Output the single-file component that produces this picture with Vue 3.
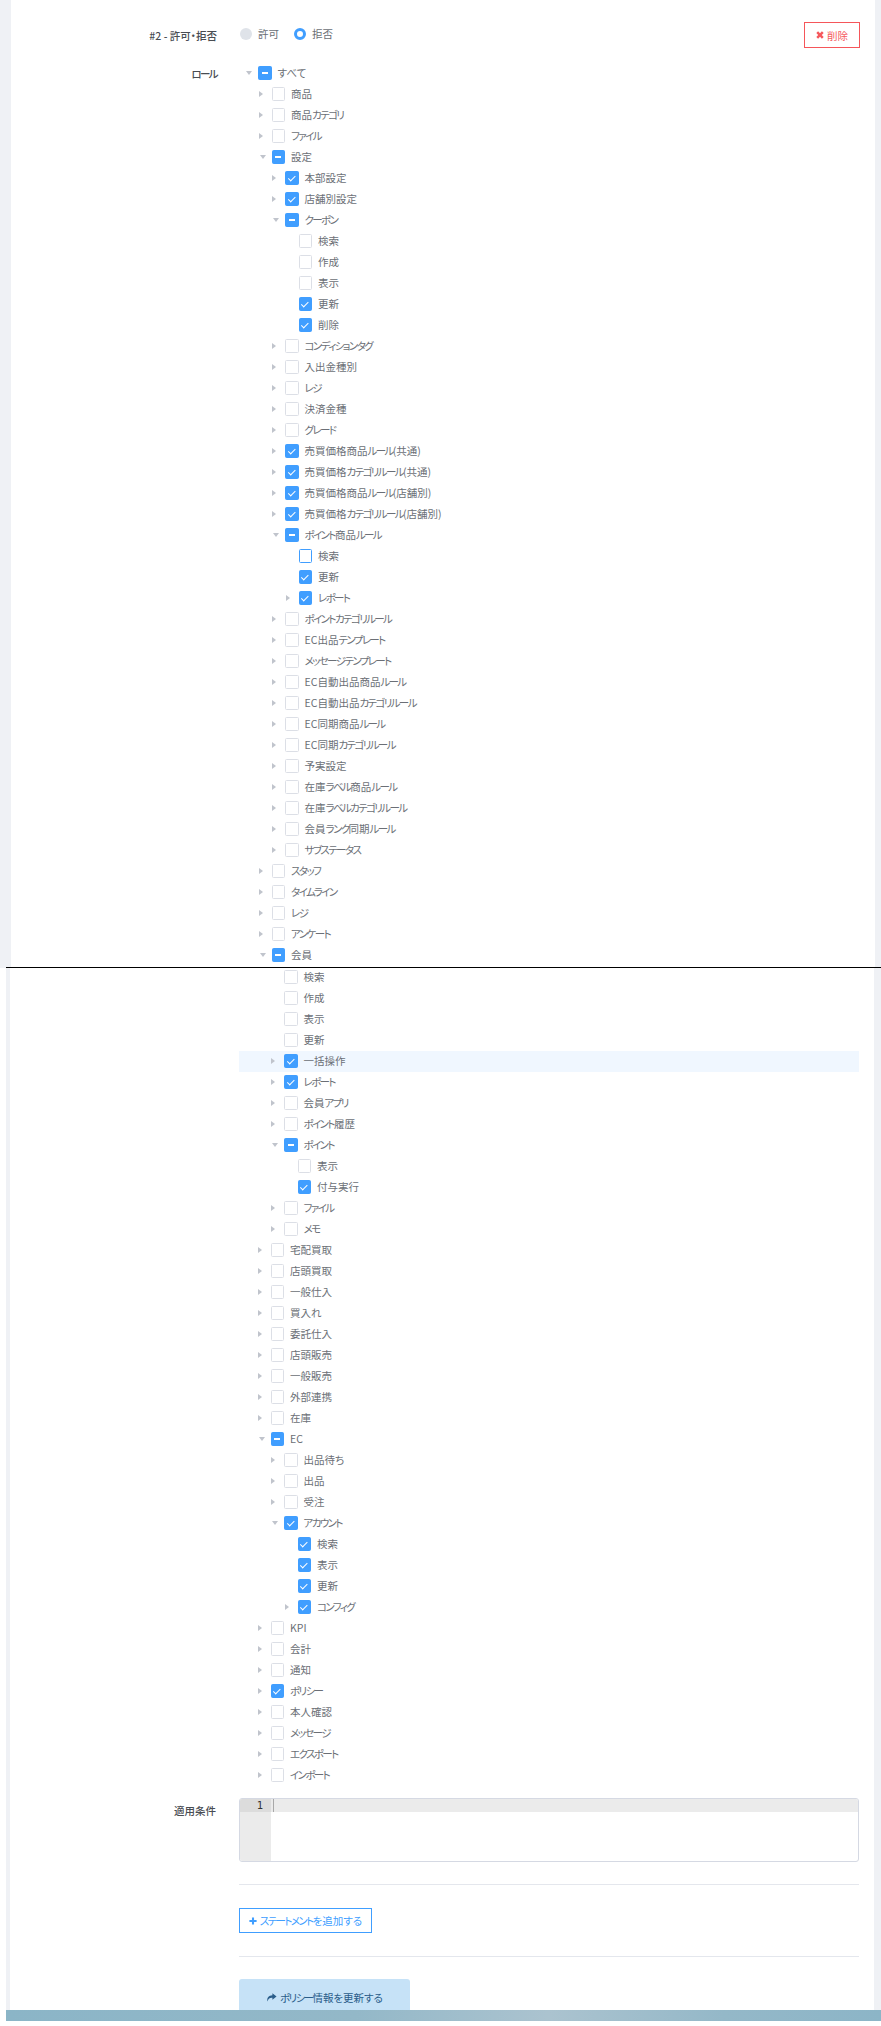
<script setup>
const R = 1, D = 2
const topRows = [
  [0, 'すべて', 2, D],
  [1, '商品', 0, R], [1, '商品カテゴリ', 0, R], [1, 'ファイル', 0, R], [1, '設定', 2, D],
  [2, '本部設定', 1, R], [2, '店舗別設定', 1, R], [2, 'クーポン', 2, D],
  [3, '検索', 0, 0], [3, '作成', 0, 0], [3, '表示', 0, 0], [3, '更新', 1, 0], [3, '削除', 1, 0],
  [2, 'コンディションタグ', 0, R], [2, '入出金種別', 0, R], [2, 'レジ', 0, R], [2, '決済金種', 0, R], [2, 'グレード', 0, R],
  [2, '売買価格商品ルール(共通)', 1, R], [2, '売買価格カテゴリルール(共通)', 1, R],
  [2, '売買価格商品ルール(店舗別)', 1, R], [2, '売買価格カテゴリルール(店舗別)', 1, R],
  [2, 'ポイント商品ルール', 2, D],
  [3, '検索', 3, 0], [3, '更新', 1, 0], [3, 'レポート', 1, R],
  [2, 'ポイントカテゴリルール', 0, R], [2, 'EC出品テンプレート', 0, R], [2, 'メッセージテンプレート', 0, R],
  [2, 'EC自動出品商品ルール', 0, R], [2, 'EC自動出品カテゴリルール', 0, R], [2, 'EC同期商品ルール', 0, R],
  [2, 'EC同期カテゴリルール', 0, R], [2, '予実設定', 0, R], [2, '在庫ラベル商品ルール', 0, R],
  [2, '在庫ラベルカテゴリルール', 0, R], [2, '会員ランク同期ルール', 0, R], [2, 'サブステータス', 0, R],
  [1, 'スタッフ', 0, R], [1, 'タイムライン', 0, R], [1, 'レジ', 0, R], [1, 'アンケート', 0, R], [1, '会員', 2, D],
]
const bottomRows = [
  [2, '検索', 0, 0], [2, '作成', 0, 0], [2, '表示', 0, 0], [2, '更新', 0, 0],
  [2, '一括操作', 1, R, true], [2, 'レポート', 1, R], [2, '会員アプリ', 0, R], [2, 'ポイント履歴', 0, R],
  [2, 'ポイント', 2, D], [3, '表示', 0, 0], [3, '付与実行', 1, 0], [2, 'ファイル', 0, R], [2, 'メモ', 0, R],
  [1, '宅配買取', 0, R], [1, '店頭買取', 0, R], [1, '一般仕入', 0, R], [1, '買入れ', 0, R], [1, '委託仕入', 0, R],
  [1, '店頭販売', 0, R], [1, '一般販売', 0, R], [1, '外部連携', 0, R], [1, '在庫', 0, R], [1, 'EC', 2, D],
  [2, '出品待ち', 0, R], [2, '出品', 0, R], [2, '受注', 0, R], [2, 'アカウント', 1, D],
  [3, '検索', 1, 0], [3, '表示', 1, 0], [3, '更新', 1, 0], [3, 'コンフィグ', 1, R],
  [1, 'KPI', 0, R], [1, '会計', 0, R], [1, '通知', 0, R], [1, 'ポリシー', 1, R], [1, '本人確認', 0, R],
  [1, 'メッセージ', 0, R], [1, 'エクスポート', 0, R], [1, 'インポート', 0, R],
]
const boxClass = ['', 'checked', 'mixed', 'focus']
const caretClass = ['', 'right', 'down']
// Katakana is set tighter than kanji in the reference, so each run gets its own span.
const runs = (text) => text.split(/([\u30A0-\u30FF]+)/).filter(Boolean).map((t) => ({ t, kana: /^[\u30A0-\u30FF]/.test(t) }))
</script>

<template>
  <div class="page">
    <section class="panel panel-top">
      <div class="form-row head-row">
        <label class="label">#2 - 許可・拒否</label>
        <div class="radios">
          <span class="radio"><i class="dot"></i>許可</span>
          <span class="radio"><i class="dot on"></i>拒否</span>
        </div>
        <button class="btn danger" type="button">
          <svg class="ico" viewBox="0 0 10 10"><path d="M2.6 .4 5 2.8 7.4 .4 9.6 2.6 7.2 5l2.4 2.4-2.2 2.2L5 7.2 2.6 9.6.4 7.4 2.8 5 .4 2.6z" /></svg>
          削除
        </button>
      </div>
      <div class="form-row tree-row">
        <label class="label"><span class="kana">ロール</span></label>
        <div class="tree">
          <div v-for="(r, i) in topRows" :key="i" class="node" :style="{ paddingLeft: r[0] * 13.5 + 'px' }">
            <span class="caret-box"><i class="caret" :class="caretClass[r[3]]"></i></span>
            <span class="box" :class="boxClass[r[2]]"></span>
            <span class="txt"><span v-for="(s, j) in runs(r[1])" :key="j" :class="{ kana: s.kana }">{{ s.t }}</span></span>
          </div>
        </div>
      </div>
    </section>

    <section class="panel panel-bottom">
      <div class="form-row">
        <div class="label"></div>
        <div class="tree">
          <div v-for="(r, i) in bottomRows" :key="i" class="node" :class="{ hl: r[4] }" :style="{ paddingLeft: r[0] * 13.5 + 'px' }">
            <span class="caret-box"><i class="caret" :class="caretClass[r[3]]"></i></span>
            <span class="box" :class="boxClass[r[2]]"></span>
            <span class="txt"><span v-for="(s, j) in runs(r[1])" :key="j" :class="{ kana: s.kana }">{{ s.t }}</span></span>
          </div>
        </div>
      </div>
      <div class="form-row editor-row">
        <label class="label">適用条件</label>
        <div class="editor">
          <div class="gutter"><div class="gutter-active">1</div></div>
          <div class="code"><div class="code-active"><i class="cursor"></i></div></div>
        </div>
      </div>
      <div class="body-col">
        <hr class="rule first" />
        <button class="btn add" type="button">
          <svg class="ico" viewBox="0 0 10 10"><path d="M3.7 .5h2.6v3.2h3.2v2.6H6.3v3.2H3.7V6.3H.5V3.7h3.2z" /></svg>
          <span><span class="kana">ステートメント</span>を追加する</span>
        </button>
        <hr class="rule second" />
        <button class="btn save" type="button">
          <svg class="ico share" viewBox="0 0 12 10"><path d="M7 .4 11.6 4 7 7.6V5.4C4.2 5.2 2.6 6.2 1.4 9.4.8 5.2 3 2.8 7 2.6z" /></svg>
          <span><span class="kana">ポリシー</span>情報を更新する</span>
        </button>
      </div>
    </section>
    <div class="band"></div>
  </div>
</template>

<style scoped>
.page {
  width: 881px;
  height: 2026px;
  overflow: hidden;
  background: #fff;
  font-family: "Noto Sans CJK JP", "Noto Sans", sans-serif;
  font-size: 10.5px;
  font-feature-settings: "palt";
  color: #606266;
}
.kana {
  letter-spacing: -1.6px;
}
.panel {
  box-sizing: border-box;
  background: #fff;
}
.panel-top {
  height: 968px;
  width: 864px;
  margin-left: 11px;
  padding: 22px 15px 0 0;
  box-shadow: -11px 0 0 #eff1f5, 6px 0 0 #eff1f5;
  overflow: hidden;
}
.panel-bottom {
  position: relative;
  height: 1043px;
  width: 875px;
  margin: -1px 0 0 6px;
  padding: 0 22px 0 4px;
  border-top: 1px solid #000;
  box-shadow: inset 4px 0 0 #eff1f5, inset -7px 0 0 #eff1f5;
  overflow: hidden;
}
.panel-bottom > .form-row:first-child .tree {
  margin-top: -1.5px;
}
.form-row {
  display: flex;
  align-items: flex-start;
}
.label {
  flex: none;
  box-sizing: border-box;
  width: 229px;
  padding-right: 23px;
  text-align: right;
  color: #484c52;
  font-weight: 500;
  line-height: 21px;
}
.head-row {
  height: 26px;
  align-items: center;
}
.radios {
  display: flex;
  gap: 15px;
  margin-top: -4px;
  color: #6b6f76;
}
.radio {
  display: flex;
  align-items: center;
  gap: 6px;
}
.dot {
  display: block;
  box-sizing: border-box;
  width: 12px;
  height: 12px;
  margin-top: 2px;
  border-radius: 50%;
  background: #dfe3e9;
}
.dot.on {
  background: #fff;
  border: 3.5px solid #409eff;
}
.btn {
  display: inline-flex;
  align-items: center;
  justify-content: center;
  box-sizing: border-box;
  padding: 0;
  background: #fff;
  font: inherit;
  font-feature-settings: inherit;
  border-radius: 0;
  white-space: nowrap;
}
.ico {
  display: block;
  width: 8px;
  height: 8px;
  fill: currentColor;
}
.danger {
  margin-left: auto;
  width: 56px;
  height: 26px;
  gap: 3px;
  color: #f5585c;
  border: 1px solid #f5565a;
}
.tree-row {
  margin-top: 14.5px;
}
.tree {
  flex: 1;
  min-width: 0;
}
.node {
  display: flex;
  align-items: center;
  box-sizing: border-box;
  height: 21px;
}
.node.hl {
  background: #f0f7ff;
}
.caret-box {
  flex: none;
  position: relative;
  width: 18px;
  height: 21px;
}
.caret {
  position: absolute;
  width: 0;
  height: 0;
  border-style: solid;
  border-color: transparent;
}
.caret.right {
  left: 5px;
  top: 7.5px;
  border-width: 3px 0 3px 4px;
  border-left-color: #c0c4cc;
}
.caret.down {
  left: 6px;
  top: 8.5px;
  border-width: 4px 3px 0 3px;
  border-top-color: #c0c4cc;
}
.box {
  flex: none;
  position: relative;
  box-sizing: border-box;
  width: 13.5px;
  height: 13.5px;
  border: 1px solid #dcdfe6;
  border-radius: 1.5px;
  background: #fff;
}
.box.focus {
  border-color: #409eff;
}
.box.checked,
.box.mixed {
  background: #409eff;
  border-color: #409eff;
}
.box.checked::after {
  content: "";
  position: absolute;
  left: 3.8px;
  top: 1.6px;
  width: 2.6px;
  height: 5.6px;
  border: solid #fff;
  border-width: 0 1px 1px 0;
  transform: rotate(45deg);
}
.box.mixed::after {
  content: "";
  position: absolute;
  left: 2.6px;
  top: 5px;
  width: 6.2px;
  height: 1.3px;
  background: #fff;
}
.txt {
  margin-left: 6px;
  padding-bottom: 1px;
  white-space: nowrap;
  color: #6b6f76;
}
.editor-row {
  margin-top: 12.5px;
}
.editor-row .label {
  margin-top: 2px;
}
.editor {
  flex: 1;
  display: flex;
  box-sizing: border-box;
  height: 64px;
  border: 1px solid #d5d9e3;
  border-radius: 3px;
  overflow: hidden;
  background: #fff;
}
.gutter {
  flex: none;
  width: 31px;
  background: #ebebeb;
}
.gutter-active {
  height: 13px;
  padding-right: 8px;
  text-align: right;
  background: #dcdcdc;
  color: #333;
  font: 10.5px/13px "DejaVu Sans Mono", "Liberation Mono", monospace;
}
.code {
  flex: 1;
}
.code-active {
  height: 13px;
  background: #ebebeb;
}
.cursor {
  display: block;
  width: 1px;
  height: 13px;
  margin-left: 2px;
  background: #a8a8a8;
}
.body-col {
  margin-left: 229px;
}
.rule {
  margin: 0;
  border: 0;
  height: 1px;
  background: #e4e7ed;
}
.rule.first {
  margin-top: 22px;
}
.add {
  display: flex;
  margin-top: 23px;
  width: 133px;
  height: 25px;
  gap: 3px;
  color: #409eff;
  border: 1px solid #409eff;
}
.rule.second {
  margin-top: 23px;
}
.save {
  display: flex;
  margin-top: 22px;
  width: 171px;
  height: 36px;
  gap: 3px;
  color: #2a5d8a;
  background: #c6e2f7;
  border: 0;
  border-radius: 3px;
}
.share {
  width: 11px;
  height: 9px;
}
.band {
  margin-left: 6px;
  height: 11px;
  background: linear-gradient(90deg, #8bb5c7 0%, #93b8c8 40%, #abc3cf 62%, #94b8c8 82%, #8cb5c7 100%);
}
</style>
